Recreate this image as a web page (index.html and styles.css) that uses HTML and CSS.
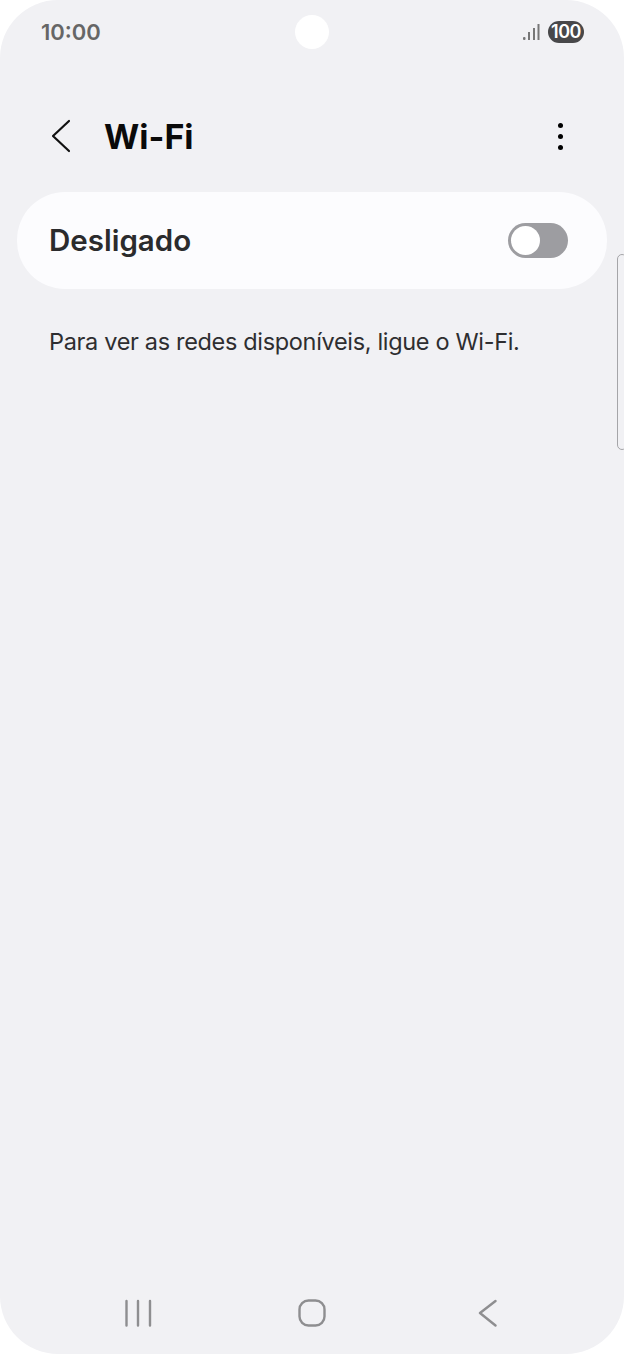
FILE: index.html
```html
<!DOCTYPE html>
<html lang="pt">
<head>
  <meta charset="UTF-8">
  <title>Wi-Fi</title>
  <link rel="stylesheet" href="styles.css">
</head>
<body>
  <div class="screen">
    <div class="status">
      <span class="clock">10:00</span>
      <span class="camera"></span>
      <div class="status-right">
        <svg class="signal" width="17" height="18" viewBox="0 0 17 18">
          <rect x="0" y="14" width="2.500" height="3" rx="1" />
          <rect x="5" y="9" width="2" height="8" />
          <rect x="10" y="5" width="2" height="12" />
          <rect x="14.500" y="1" width="2" height="16" />
        </svg>
        <span class="battery">100</span>
      </div>
    </div>

    <div class="header">
      <svg class="back" width="24" height="36" viewBox="0 0 24 36">
        <path d="M20 3 L4 18 L20 33" />
      </svg>
      <h1>Wi-Fi</h1>
      <div class="more"><i></i><i></i><i></i></div>
    </div>

    <div class="card">
      <span class="card-label">Desligado</span>
      <span class="switch"><span class="knob"></span></span>
    </div>

    <p class="hint">Para ver as redes disponíveis, ligue o Wi-Fi.</p>

    <div class="spacer"></div>

    <div class="navbar">
      <svg width="28" height="28" viewBox="0 0 28 28">
        <path d="M2.500 2 V26.500 M14 2 V26.500 M26 2 V26.500" />
      </svg>
      <svg width="28" height="28" viewBox="0 0 28 28">
        <rect x="1.500" y="1.500" width="25" height="25" rx="9" />
      </svg>
      <svg width="28" height="28" viewBox="0 0 28 28">
        <path d="M23.500 2 L8 14 L23.500 26.500" />
      </svg>
    </div>

    <div class="scroll-handle"></div>
  </div>
</body>
</html>
```

FILE: styles.css
```css
html, body { margin: 0; padding: 0; background: #fff; }
body { font-family: Inter, "Noto Sans", sans-serif; }

.screen { position: relative; width: 624px; height: 1354px; background: #f1f1f4; border-radius: 58px; overflow: hidden; display: flex; flex-direction: column; }

.status { position: relative; height: 64px; padding: 0 40px 0 41px; display: flex; align-items: center; justify-content: space-between; box-sizing: border-box; }
.clock { font-size: 22px; font-weight: 600; color: #666; }
.camera { position: absolute; left: 295px; top: 15px; width: 34px; height: 34px; border-radius: 50%; background: #fff; }
.status-right { display: flex; align-items: center; gap: 8px; }
.signal { fill: #777; }
.battery { width: 36px; background: #48484a; color: #fff; font-size: 18px; font-weight: 600; letter-spacing: -0.5px; line-height: 22px; text-align: center; border-radius: 11px; }

.header { display: flex; align-items: center; height: 36px; margin-top: 54px; padding: 0 49px; }
.back { fill: none; stroke: #111; stroke-width: 2.200; stroke-linecap: round; stroke-linejoin: round; margin-right: 31px; }
.header h1 { margin: 0; font-size: 34px; font-weight: 700; color: #0a0a0a; flex: 1; }
.more { display: flex; flex-direction: column; gap: 6px; margin-right: 12px; }
.more i { display: block; width: 5px; height: 5px; border-radius: 50%; background: #000; }

.card { display: flex; align-items: center; justify-content: space-between; height: 97px; margin: 38px 17px 0; padding: 0 39px 0 32px; background: #fcfcfe; border-radius: 48px; }
.card-label { font-size: 29.500px; font-weight: 600; color: #2b2b2d; padding-bottom: 2px; }
.switch { display: block; width: 60px; height: 35px; background: #9d9da1; border-radius: 18px; padding: 3px; box-sizing: border-box; }
.knob { display: block; width: 29px; height: 29px; background: #fff; border-radius: 50%; }

.hint { margin: 37px 49px 0; font-size: 23.500px; letter-spacing: -0.33px; line-height: 32px; color: #2e2e30; }

.spacer { flex: 1; }

.navbar { display: flex; justify-content: space-between; height: 28px; padding: 0 124px; margin-bottom: 27px; }
.navbar svg { fill: none; stroke: #8e8e90; stroke-width: 2.400; stroke-linecap: round; stroke-linejoin: round; }

.scroll-handle { position: absolute; left: 617px; top: 254px; width: 10px; height: 196px; box-sizing: border-box; border: 1.500px solid #a5a5a8; border-radius: 7px; }
```
